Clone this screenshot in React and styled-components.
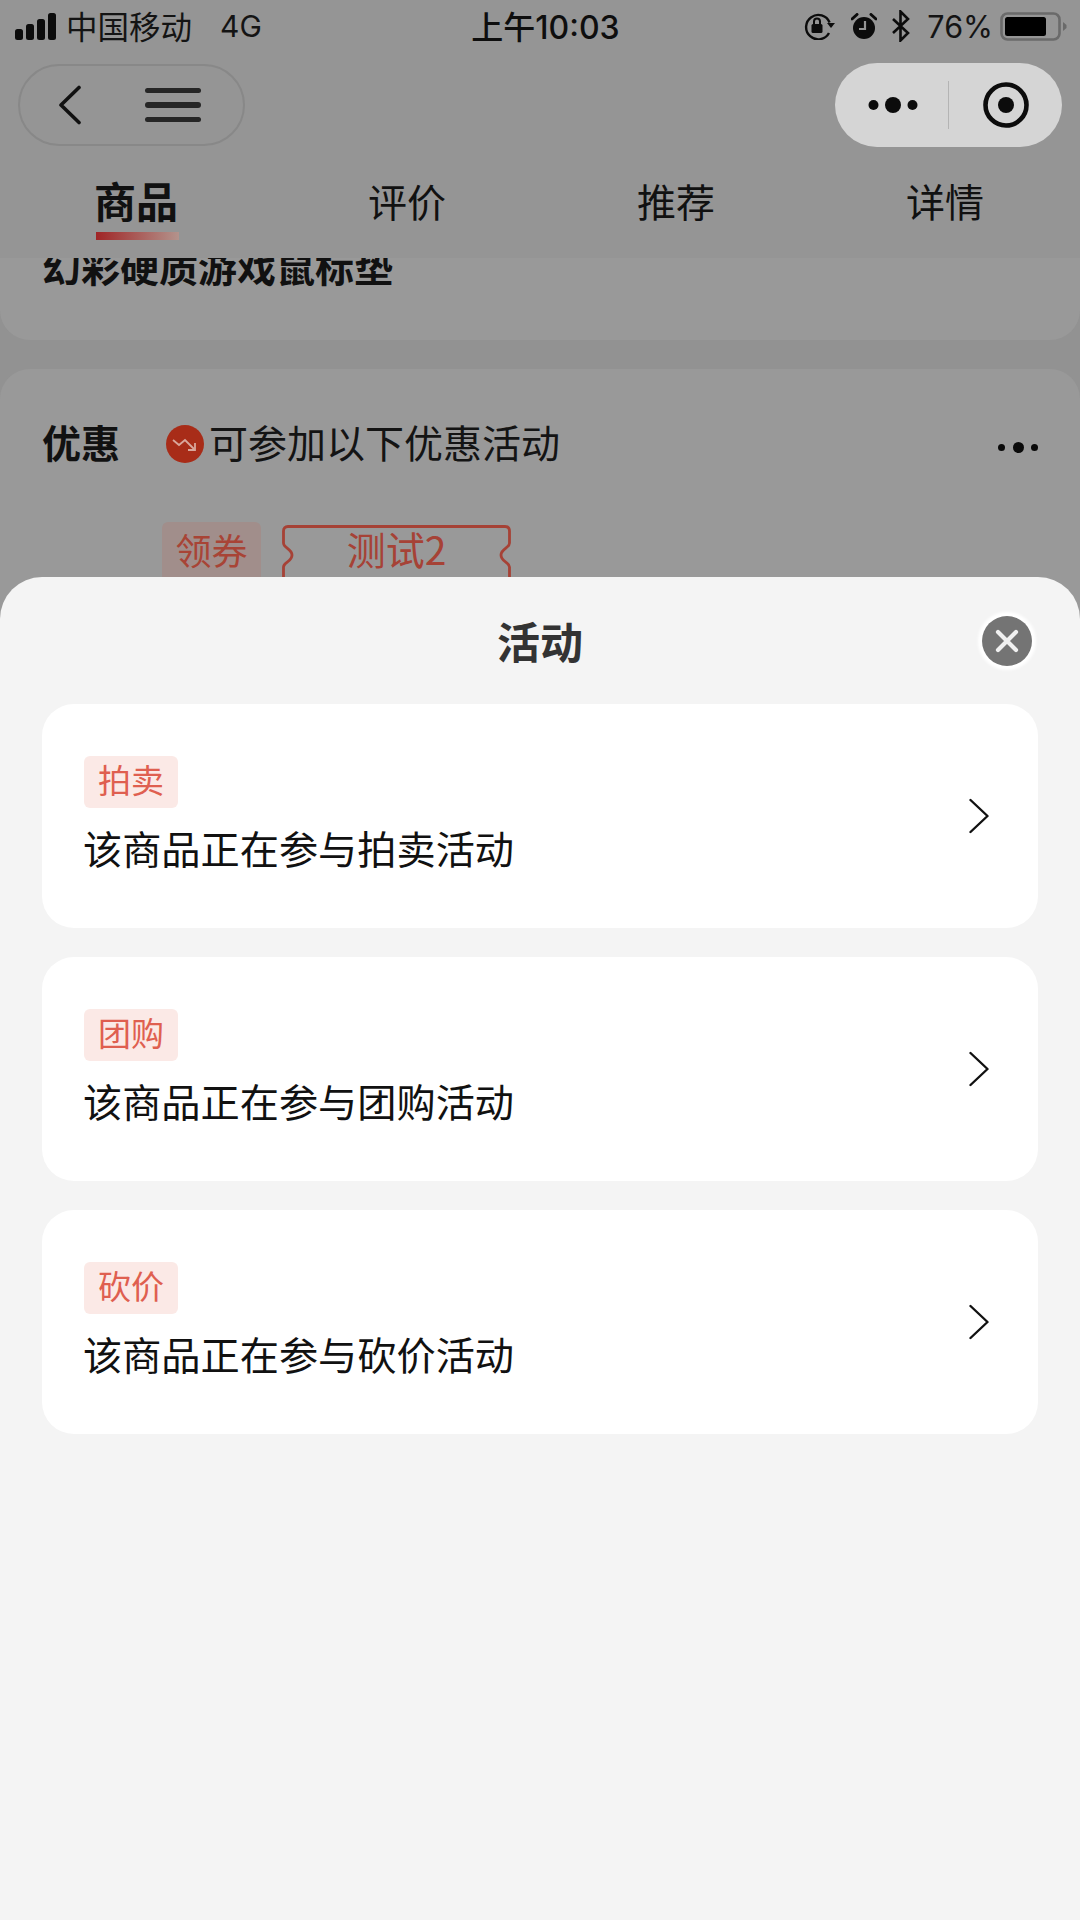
import React from "react";
import styled, { createGlobalStyle } from "styled-components";

const Global = createGlobalStyle`
  html, body { margin: 0; padding: 0; background: #929292; }
  * { box-sizing: border-box; }
`;

const FONT = `"Noto Sans CJK SC", Inter, "Liberation Sans", sans-serif`;

const Screen = styled.div`
  position: relative;
  width: 1080px;
  height: 1920px;
  overflow: hidden;
  display: flex;
  flex-direction: column;
  background: #929292;
  font-family: ${FONT};
  color: #0c0c0c;
`;

const Header = styled.header`
  height: 258px;
  flex: none;
  background: #959595;
  display: flex;
  flex-direction: column;
`;

const StatusBar = styled.div`
  height: 52px;
  padding: 0 13px 0 15px;
  display: grid;
  grid-template-columns: 1fr auto 1fr;
  align-items: center;
`;

const StatusLeft = styled.div`
  display: flex;
  align-items: center;
  gap: 9px;
  font-size: 31.5px;
  color: #141414;
`;

const Carrier = styled.span`
  margin-bottom: 3px;
`;

const Network = styled.span`
  margin-left: 19px;
  font-family: Inter, "Liberation Sans", sans-serif;
  font-size: 30px;
  margin-bottom: 1px;
`;

const Clock = styled.div`
  font-size: 32px;
  font-weight: 500;
  margin: 0 0 2px 9px;
  color: #0e0e0e;
  font-family: Inter, "Noto Sans CJK SC", sans-serif;
`;

const StatusRight = styled.div`
  display: flex;
  align-items: center;
  justify-content: flex-end;
  gap: 0;
`;

const Percent = styled.span`
  font-family: Inter, "Liberation Sans", sans-serif;
  font-size: 30.5px;
  margin: 0 7px 0 17px;
  color: #141414;
`;

const NavRow = styled.div`
  height: 84px;
  margin-top: 11px;
  padding: 0 18px 0 18px;
  display: flex;
  align-items: center;
  justify-content: space-between;
`;

const LeftCapsule = styled.div`
  width: 227px;
  height: 82px;
  border: 2px solid #888888;
  border-radius: 41px;
  display: flex;
  align-items: center;
  padding-left: 38px;
  gap: 63px;
`;

const MenuBars = styled.div`
  width: 56px;
  display: flex;
  flex-direction: column;
  gap: 9px;
`;

const MenuBar = styled.span`
  display: block;
  height: 5.5px;
  border-radius: 3px;
  background: #262626;
`;

const RightCapsule = styled.div`
  width: 227px;
  height: 84px;
  border-radius: 42px;
  background: #d5d5d5;
  display: flex;
  align-items: center;
`;

const CapsuleCell = styled.div`
  flex: 0 0 ${(p) => p.$width}px;
  height: 48px;
  display: flex;
  align-items: center;
  justify-content: center;
  padding-left: ${(p) => p.$inset || 0}px;
  & + & { border-left: 1px solid #b4b4b4; }
`;

const Tabs = styled.nav`
  flex: 1;
  display: grid;
  grid-template-columns: 272px 270px 268px 270px;
`;

const Tab = styled.div`
  position: relative;
  padding-top: 25px;
  text-align: center;
  font-size: ${(p) => (p.$active ? 42 : 39)}px;
  line-height: 56px;
  font-weight: ${(p) => (p.$active ? 700 : 400)};
  color: #111;
`;

const TabLine = styled.span`
  position: absolute;
  left: 96px;
  top: 85px;
  width: 83px;
  height: 8px;
  background: linear-gradient(90deg, #a02526, #b3938c);
`;

const ScrollArea = styled.main`
  flex: 1;
  overflow: hidden;
  display: flex;
  flex-direction: column;
  gap: 29px;
`;

const TitleCard = styled.section`
  flex: none;
  height: 82px;
  overflow: hidden;
  background: #999999;
  border-radius: 0 0 30px 30px;
  padding-left: 42px;
`;

const ProductTitle = styled.div`
  margin-top: -21px;
  font-size: 39px;
  line-height: 56px;
  font-weight: 700;
  color: #111;
`;

const PromoCard = styled.section`
  flex: 1;
  background: #999999;
  border-radius: 30px 30px 0 0;
  padding: 46px 42px 0 42px;
`;

const PromoRow = styled.div`
  display: flex;
  align-items: center;
  height: 58px;
`;

const PromoLabel = styled.div`
  width: 124px;
  font-size: 39px;
  font-weight: 700;
  color: #111;
  margin-bottom: 7px;
`;

const PromoText = styled.div`
  flex: 1;
  margin: 0 0 7px 5px;
  font-size: 39px;
  color: #141414;
`;

const CouponRow = styled.div`
  display: flex;
  align-items: flex-start;
  gap: 21px;
  margin: 49px 0 0 120px;
`;

const CouponTag = styled.div`
  width: 99px;
  height: 60px;
  border-radius: 6px;
  background: #a18e8b;
  color: #a84436;
  font-size: 36px;
  line-height: 54px;
  text-align: center;
`;

const Ticket = styled.div`
  position: relative;
  width: 229px;
  height: 58px;
  margin-top: 3px;
  color: #a64236;
  font-size: 39px;
  line-height: 46px;
  text-align: center;
`;

const TicketOutline = styled.svg`
  position: absolute;
  left: 0;
  top: 0;
`;

const Sheet = styled.aside`
  position: absolute;
  left: 0;
  right: 0;
  top: 577px;
  bottom: 0;
  background: #f4f4f4;
  border-radius: 42px 42px 0 0;
  padding: 0 42px;
  display: flex;
  flex-direction: column;
`;

const SheetHeader = styled.div`
  position: relative;
  height: 127px;
  flex: none;
  display: flex;
  align-items: center;
  justify-content: center;
`;

const SheetTitle = styled.h2`
  margin: 0 0 1px;
  font-size: 43px;
  font-weight: 600;
  color: #333;
`;

const CloseButton = styled.div`
  position: absolute;
  right: 6px;
  top: 39px;
  width: 50px;
  height: 50px;
  border-radius: 50%;
  background: #747474;
  box-shadow: 0 0 3px 4px #ffffff;
  display: flex;
  align-items: center;
  justify-content: center;
`;

const ActivityList = styled.div`
  display: flex;
  flex-direction: column;
  gap: 29px;
`;

const ActivityCard = styled.div`
  height: 224px;
  border-radius: 32px;
  background: #ffffff;
  display: flex;
  align-items: center;
  justify-content: space-between;
  padding: 0 49px 0 42px;
`;

const ActivityBody = styled.div`
  display: flex;
  flex-direction: column;
  align-items: flex-start;
  margin-bottom: 2px;
`;

const ActivityTag = styled.span`
  width: 94px;
  height: 52px;
  border-radius: 6px;
  background: #fbe9e6;
  color: #df5f50;
  font-size: 33px;
  line-height: 46px;
  text-align: center;
`;

const ActivityText = styled.div`
  margin: 11px 0 0 -1px;
  font-size: 39.2px;
  line-height: 56px;
  color: #111;
`;

const Signal = () => (
  <svg width="42" height="27" viewBox="0 0 42 27">
    <rect x="0" y="16" width="8" height="11" rx="2.5" fill="#0c0c0c" />
    <rect x="11" y="11" width="8" height="16" rx="2.5" fill="#0c0c0c" />
    <rect x="22" y="6" width="8" height="21" rx="2.5" fill="#0c0c0c" />
    <rect x="33" y="0" width="8" height="27" rx="2.5" fill="#0c0c0c" />
  </svg>
);

const RotationLock = () => (
  <svg width="32" height="28" viewBox="0 0 32 28" style={{ marginRight: 16 }}>
    <path d="M26 21 A12.2 12.2 0 1 1 26.6 10.5" fill="none" stroke="#0c0c0c" strokeWidth="2.4" />
    <path d="M24 11 L32 11 L28 16 Z" fill="#0c0c0c" />
    <rect x="8.5" y="12" width="11" height="9" rx="1.5" fill="#0c0c0c" />
    <path d="M11 12 V9.5 a3 3 0 0 1 6 0 V12" fill="none" stroke="#0c0c0c" strokeWidth="2" />
  </svg>
);

const Alarm = () => (
  <svg width="26" height="27" viewBox="0 0 26 27" style={{ marginRight: 15 }}>
    <circle cx="13" cy="15" r="11" fill="#0c0c0c" />
    <path d="M1 6 L6 1.5 M25 6 L20 1.5" stroke="#0c0c0c" strokeWidth="3" strokeLinecap="round" />
    <path d="M14 8 V16 H8" fill="none" stroke="#959595" strokeWidth="2.2" />
  </svg>
);

const Bluetooth = () => (
  <svg width="18" height="32" viewBox="0 0 18 32">
    <path d="M1 9 L16 23 L8.5 30.5 V1.5 L16 9 L1 23" fill="none" stroke="#0c0c0c" strokeWidth="2.6" />
  </svg>
);

const Battery = () => (
  <svg width="67" height="29" viewBox="0 0 67 29">
    <rect x="1.5" y="1.5" width="58" height="26" rx="6" fill="none" stroke="#6a6a6a" strokeWidth="2.6" />
    <rect x="5" y="5" width="41" height="19" rx="2.5" fill="#000" />
    <path d="M63 10 L66.5 13 V16 L63 19 Z" fill="#6a6a6a" />
  </svg>
);

const BackChevron = () => (
  <svg width="24" height="40" viewBox="0 0 24 40">
    <path d="M21 2.5 L3 20 L21 37.5" fill="none" stroke="#111" strokeWidth="3.6" strokeLinecap="round" strokeLinejoin="round" />
  </svg>
);

const Dots = () => (
  <svg width="50" height="18" viewBox="0 0 50 18">
    <circle cx="5.5" cy="9" r="5" fill="#0c0c0c" />
    <circle cx="25" cy="9" r="8" fill="#0c0c0c" />
    <circle cx="44.5" cy="9" r="5" fill="#0c0c0c" />
  </svg>
);

const Target = () => (
  <svg width="46" height="46" viewBox="0 0 46 46">
    <circle cx="23" cy="23" r="20.5" fill="none" stroke="#0c0c0c" strokeWidth="4.6" />
    <circle cx="23" cy="23" r="8" fill="#0c0c0c" />
  </svg>
);

const DownBadge = () => (
  <svg width="38" height="38" viewBox="0 0 38 38">
    <circle cx="19" cy="19" r="19" fill="#a82c18" />
    <path d="M7 15 L13 20 L19 15 L28 24" fill="none" stroke="#d9a79c" strokeWidth="1.8" />
    <path d="M29 18 V25 H22" fill="none" stroke="#d9a79c" strokeWidth="1.8" />
  </svg>
);

const MoreDots = styled.div`
  width: 40px;
  height: 14px;
  margin-top: 7px;
  display: flex;
  align-items: center;
  justify-content: space-between;
`;

const MoreDot = styled.span`
  width: ${(p) => (p.$big ? 11 : 7)}px;
  height: ${(p) => (p.$big ? 11 : 7)}px;
  border-radius: 50%;
  background: #0a0a0a;
`;

const TicketShape = () => (
  <TicketOutline width="229" height="60" viewBox="0 0 229 60">
    <path
      d="M1.5 60 V42 C1.5 37 10 37 10 30 C10 24 1.5 23 1.5 18 V6 Q1.5 1.5 6 1.5 H223 Q227.5 1.5 227.5 6 V18 C227.5 23 219 24 219 30 C219 37 227.5 37 227.5 42 V60"
      fill="none"
      stroke="#a64236"
      strokeWidth="2.8"
    />
  </TicketOutline>
);

const Chevron = () => (
  <svg width="20" height="36" viewBox="0 0 20 36">
    <path d="M1.5 2 L18.5 18 L1.5 34" fill="none" stroke="#111" strokeWidth="2.4" strokeLinecap="round" strokeLinejoin="round" />
  </svg>
);

const CloseIcon = () => (
  <svg width="24" height="24" viewBox="0 0 24 24">
    <path d="M3 3 L21 21 M21 3 L3 21" stroke="#f0f0f0" strokeWidth="4.2" strokeLinecap="round" />
  </svg>
);

const activities = [
  { tag: "拍卖", text: "该商品正在参与拍卖活动" },
  { tag: "团购", text: "该商品正在参与团购活动" },
  { tag: "砍价", text: "该商品正在参与砍价活动" },
];

const tabs = ["商品", "评价", "推荐", "详情"];

export default function App() {
  return (
    <Screen>
      <Global />
      <Header>
        <StatusBar>
          <StatusLeft>
            <Signal />
            <Carrier>中国移动</Carrier>
            <Network>4G</Network>
          </StatusLeft>
          <Clock>上午10:03</Clock>
          <StatusRight>
            <RotationLock />
            <Alarm />
            <Bluetooth />
            <Percent>76%</Percent>
            <Battery />
          </StatusRight>
        </StatusBar>
        <NavRow>
          <LeftCapsule>
            <BackChevron />
            <MenuBars>
              <MenuBar />
              <MenuBar />
              <MenuBar />
            </MenuBars>
          </LeftCapsule>
          <RightCapsule>
            <CapsuleCell $width={113} $inset={2}>
              <Dots />
            </CapsuleCell>
            <CapsuleCell $width={114}>
              <Target />
            </CapsuleCell>
          </RightCapsule>
        </NavRow>
        <Tabs>
          {tabs.map((t, i) => (
            <Tab key={t} $active={i === 0}>
              {t}
              {i === 0 && <TabLine />}
            </Tab>
          ))}
        </Tabs>
      </Header>
      <ScrollArea>
        <TitleCard>
          <ProductTitle>幻彩硬质游戏鼠标垫</ProductTitle>
        </TitleCard>
        <PromoCard>
          <PromoRow>
            <PromoLabel>优惠</PromoLabel>
            <DownBadge />
            <PromoText>可参加以下优惠活动</PromoText>
            <MoreDots>
              <MoreDot />
              <MoreDot $big />
              <MoreDot />
            </MoreDots>
          </PromoRow>
          <CouponRow>
            <CouponTag>领券</CouponTag>
            <Ticket>
              <TicketShape />
              测试2
            </Ticket>
          </CouponRow>
        </PromoCard>
      </ScrollArea>
      <Sheet>
        <SheetHeader>
          <SheetTitle>活动</SheetTitle>
          <CloseButton>
            <CloseIcon />
          </CloseButton>
        </SheetHeader>
        <ActivityList>
          {activities.map((a) => (
            <ActivityCard key={a.tag}>
              <ActivityBody>
                <ActivityTag>{a.tag}</ActivityTag>
                <ActivityText>{a.text}</ActivityText>
              </ActivityBody>
              <Chevron />
            </ActivityCard>
          ))}
        </ActivityList>
      </Sheet>
    </Screen>
  );
}
